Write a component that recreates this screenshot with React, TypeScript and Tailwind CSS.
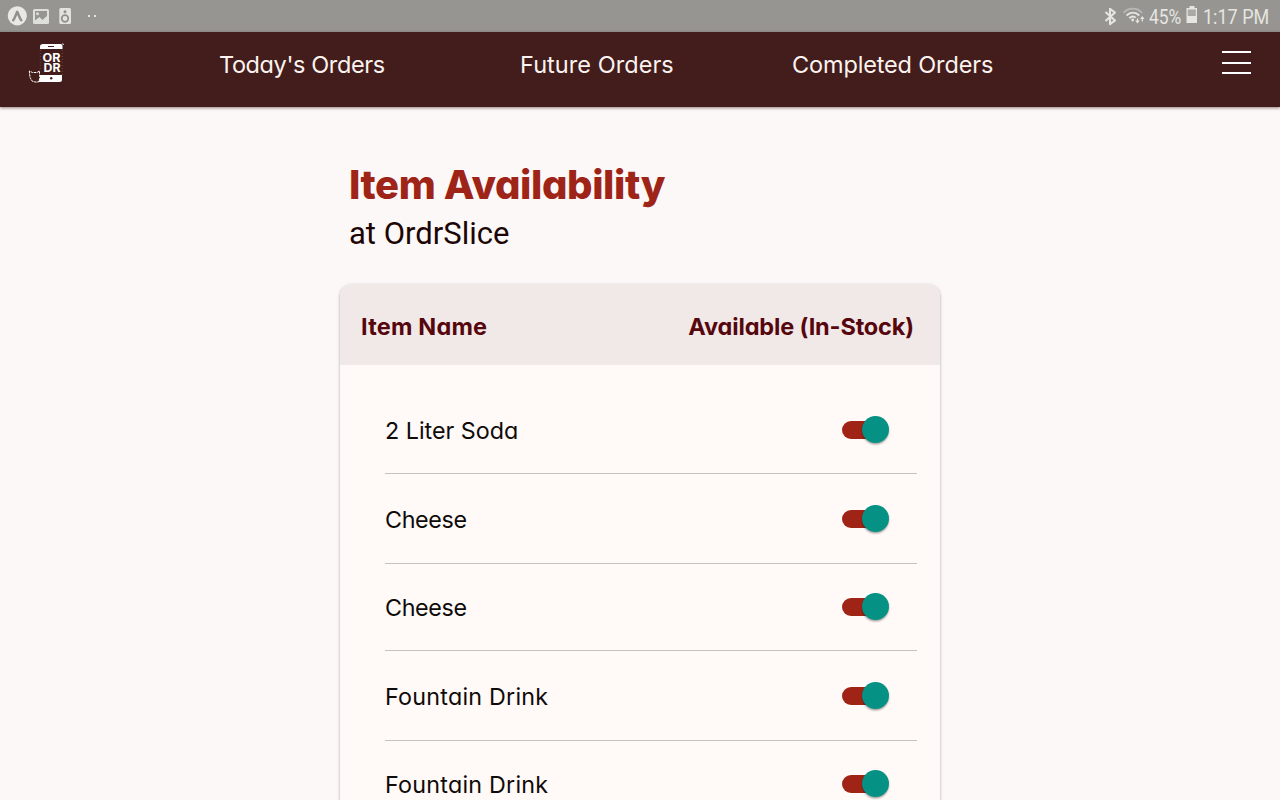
import { useState } from 'react';
import clsx from 'clsx';

interface MenuItem {
  id: number;
  name: string;
}

const ITEMS: MenuItem[] = [
  { id: 1, name: '2 Liter Soda' },
  { id: 2, name: 'Cheese' },
  { id: 3, name: 'Cheese' },
  { id: 4, name: 'Fountain Drink' },
  { id: 5, name: 'Fountain Drink' },
];

// Android status bar with notification and system icons
function StatusBar() {
  return (
    <div className="flex h-8 items-center justify-between bg-[#969591] font-['Roboto',sans-serif] text-[#e6e5e1]">
      <svg className="h-8 w-[110px]" viewBox="0 0 110 32" fill="none">
        <circle cx="17.3" cy="15.8" r="9.6" fill="#e9e8e4" />
        <path d="M13.2 20.2c1.7-2.1 2.5-5.3 4-8.4 1.500 3.100 2.400 6.300 4.100 8.400" stroke="#91908c" strokeWidth="2.500" strokeLinecap="round" strokeLinejoin="round" />
        <rect x="33" y="9" width="16" height="15" rx="1.500" fill="#dededa" />
        <path d="M35 11h12v5l-4.500 4-3-3-4.500 3.500z" fill="#969591" />
        <circle cx="37.500" cy="13.800" r="1.500" fill="#dededa" />
        <path d="M35.500 22l4-3.500 2.500 2.300 4.500-4.300v5.500z" fill="#dededa" />
        <rect x="59.300" y="8" width="11.700" height="16" rx="1.500" fill="#e3e2de" />
        <circle cx="65" cy="11.800" r="1.500" fill="#91908c" />
        <circle cx="65" cy="18.500" r="3.300" stroke="#91908c" strokeWidth="1.700" />
        <rect x="88" y="15" width="2" height="2" fill="#e3e2de" />
        <rect x="94" y="15" width="2" height="2" fill="#e3e2de" />
      </svg>
      <div className="flex items-center pr-[11px] text-[20px] leading-8">
        <svg className="h-8 w-[46px]" viewBox="1100 0 46 32" fill="none">
          <path d="M1105.500 12l9.500 8.500-5 3.700V8.800l5 3.700-9.500 8.500" stroke="#e6e5e1" strokeWidth="2.100" strokeLinejoin="round" />
          <path d="M1123.500 12.800c5-5.500 13.500-5.500 18.500 0" stroke="#b9b8b4" strokeWidth="1.800" />
          <path d="M1126.500 15.500c3.800-3.800 9-3.800 12.800 0M1129.300 18.200c2.200-2.100 4.600-2.100 6.400-.5" stroke="#e6e5e1" strokeWidth="1.800" />
          <circle cx="1132.700" cy="20" r="1.400" fill="#e6e5e1" />
          <path d="M1137.500 18.500v4M1142.300 21.500v-4" stroke="#e6e5e1" strokeWidth="1.200" />
          <path d="M1135.300 20.500h4.400l-2.200 3zM1140.100 19h4.400l-2.200-3z" fill="#e6e5e1" />
        </svg>
        <span className="mt-[2px] ml-[3px] w-[32px] origin-left scale-x-[.87] whitespace-nowrap">45%</span>
        <svg className="mx-[5px] h-8 w-[12px]" viewBox="0 0 12 32">
          <path d="M3.500 6h5v2H11v15H.500V8h3z" fill="#e6e5e1" />
          <rect x="1.800" y="9.500" width="8" height="6.500" fill="#aaa9a5" />
        </svg>
        <span className="mt-[2px] w-[66px] origin-left scale-x-[.9] whitespace-nowrap">1:17 PM</span>
      </div>
    </div>
  );
}

function Logo() {
  return (
    <svg className="h-[42px] w-[38px]" viewBox="28 42 38 42" fill="none">
      <path d="M43 44h17.500q2 0 2 2v3h-22.500v-2.500q0-2.500 3-2.500z" fill="#fff" />
      <path d="M48 46.500h6" stroke="#421d1b" strokeWidth="1" />
      <path d="M62 43.800l2 .7" stroke="#fff" strokeWidth=".8" />
      <path d="M62.300 50v25M40.300 50v20" stroke="#8a6462" strokeWidth=".6" strokeDasharray="1 2" />
      <path d="M39 75h23v4.500q0 2.500-2.500 2.500H38z" fill="#fff" />
      <circle cx="51.200" cy="78.300" r="1.200" fill="#421d1b" />
      <text x="42.500" y="61.500" textLength="18" lengthAdjust="spacingAndGlyphs" fill="#fff" className="font-['Inter',sans-serif] text-[11.500px] font-bold">OR</text>
      <text x="43.500" y="72.300" textLength="17" lengthAdjust="spacingAndGlyphs" fill="#fff" className="font-['Inter',sans-serif] text-[11.500px] font-bold">DR</text>
      <path d="M29.300 71l.7 6.500 2 3.500 3 1h3.500l1.500-4-.5-4.500 0-2.500-2.500 1.500h-4.500z" fill="#421d1b" stroke="#fff" strokeWidth="1" strokeDasharray="2.500 .7" />
    </svg>
  );
}

function NavBar() {
  return (
    <header className="relative flex h-[75px] items-start bg-[#421d1b] text-[23.500px] leading-8 text-[#fcf3f0] shadow-[0_1px_3px_rgba(66,29,27,0.55)]">
      <div className="mt-[10px] ml-7 w-[191px]">
        <Logo />
      </div>
      <nav className="mt-[17px] flex">
        <a className="w-[301px] tracking-[-0.400px]">Today's Orders</a>
        <a className="w-[272px] tracking-[0.050px]">Future Orders</a>
        <a className="tracking-[-0.150px]">Completed Orders</a>
      </nav>
      <button className="mt-[19px] mr-[29px] ml-auto flex w-[29px] flex-col gap-[8.500px]" aria-label="Menu">
        <span className="h-[2px] w-full bg-white" />
        <span className="h-[2px] w-full bg-white" />
        <span className="h-[2px] w-full bg-white" />
      </button>
    </header>
  );
}

function Toggle({ on, onChange }: { on: boolean; onChange: () => void }) {
  return (
    <button
      role="switch"
      aria-checked={on}
      onClick={onChange}
      className={clsx('mb-px flex h-[27px] w-[47px] items-center', !on && 'flex-row-reverse')}
    >
      <span className="h-[18px] w-[38px] rounded-full bg-[#a02416]" />
      <span className="-ml-[18.500px] size-[27px] shrink-0 rounded-full bg-[#059184] shadow-[0_1.500px_2px_rgba(0,0,0,0.35)]" />
    </button>
  );
}

export default function App() {
  const [available, setAvailable] = useState<Record<number, boolean>>({ 1: true, 2: true, 3: true, 4: true, 5: true });

  const toggle = (id: number) => setAvailable((prev) => ({ ...prev, [id]: !prev[id] }));

  return (
    <div className="h-screen overflow-hidden bg-[#fcf8f7] font-['Inter',sans-serif] [font-feature-settings:'cv11']">
      <StatusBar />
      <NavBar />
      <main className="mx-auto w-[600px] pt-[53px]">
        <div className="pl-[9px]">
          <h1 className="text-[40px] leading-[50px] font-extrabold tracking-[-0.400px] whitespace-nowrap text-[#9f2418]">Item Availability</h1>
          <p className="mt-[4px] font-['Roboto',sans-serif] text-[31px] leading-[40px] text-[#1c0605]">at OrdrSlice</p>
        </div>
        <section className="mt-[30px] h-[600px] overflow-hidden rounded-t-[12px] bg-[#fffaf7] shadow-[0_1px_3px_rgba(0,0,0,0.35)]">
          <div className="flex h-[81px] items-center justify-between bg-[#f1e9e8] pt-[5px] pr-[26px] pl-[21px] text-[23.500px] font-bold text-[#56070e]">
            <span className="tracking-[0.200px]">Item Name</span>
            <span className="tracking-[-0.150px]">Available (In-Stock)</span>
          </div>
          <ul className="pt-[22px] pr-[23px] pl-[45px]">
            {ITEMS.map((item) => (
              <li key={item.id} className="flex h-[87px] items-center justify-between border-b border-[#c6c2c0] pr-[28px] even:h-[90px] even:pt-px">
                <span className={clsx('pt-[3px] text-[23.300px] text-[#0f0b0a]', item.name === 'Cheese' && 'tracking-[-0.350px]', item.name === 'Fountain Drink' && 'tracking-[0.230px]')}>
                  {item.name}
                </span>
                <Toggle on={available[item.id]} onChange={() => toggle(item.id)} />
              </li>
            ))}
          </ul>
        </section>
      </main>
    </div>
  );
}
